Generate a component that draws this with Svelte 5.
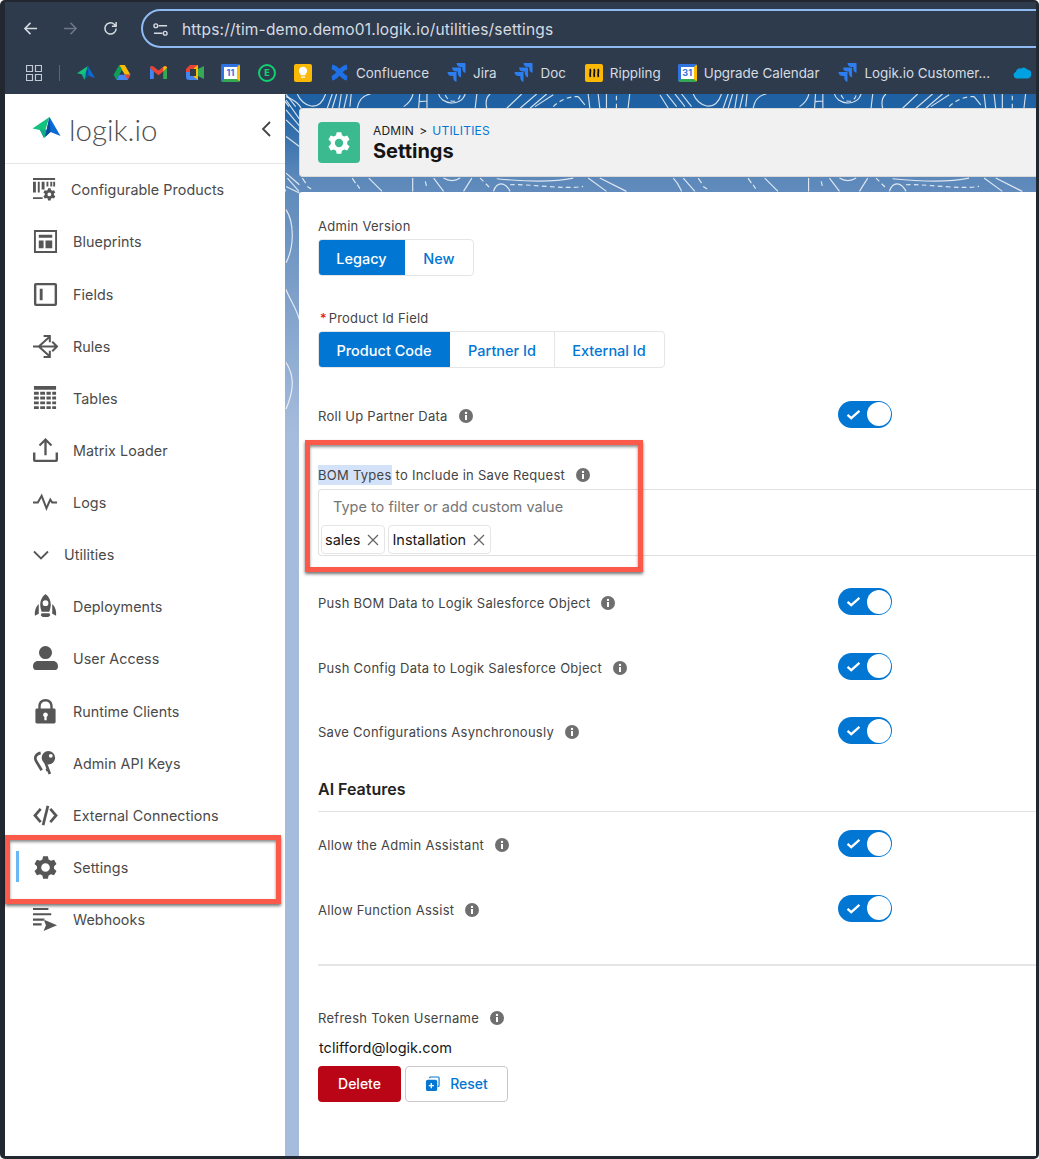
<script>
  // rounded-ish gear, returned as a path with a round hole
  function gear(cx, cy, R, r, hole) {
    let d = '';
    for (let i = 0; i < 6; i++) {
      const a = -90 + i * 60;
      [[r, a - 21], [R, a - 12], [R, a + 12], [r, a + 21]].forEach(([rad, deg], j) => {
        const t = (deg * Math.PI) / 180;
        const x = (cx + rad * Math.cos(t)).toFixed(2);
        const y = (cy + rad * Math.sin(t)).toFixed(2);
        d += (i === 0 && j === 0 ? 'M' : 'L') + x + ' ' + y;
      });
    }
    d += `Z M${cx - hole} ${cy}a${hole} ${hole} 0 1 0 ${hole * 2} 0a${hole} ${hole} 0 1 0 ${-hole * 2} 0Z`;
    return d;
  }

  const nav = [
    {
      name: 'Configurable Products',
      first: true,
      fill:
        'M0 1h23v2H0zM0 5h3v11H0zM5 5h2v11H5zM9 5h3v8H9zM14 5h2v5h-2zM18 5h2v5h-2zM21 5h2v5h-2zM0 21h10v2H0z ' +
        gear(17, 18, 6.5, 4.8, 2)
    },
    {
      name: 'Blueprints',
      fill: 'M1 1h24v24H1zM3 3v20h20V3zM6 6h14v3H6zM6 12h5v8H6zM13 12h7v8h-7z'
    },
    {
      name: 'Fields',
      fill: 'M3 1h20a2 2 0 0 1 2 2v20a2 2 0 0 1-2 2H3a2 2 0 0 1-2-2V3a2 2 0 0 1 2-2zM3.500 3.500v19h19v-19zM7 7h3v12H7z'
    },
    {
      name: 'Rules',
      stroke: 'M0 13h24M20 8l5 5-5 5M6 13L17 3M6 13l11 10M11 2h6.500v6.500M11 24h6.500v-6.500'
    },
    {
      name: 'Tables',
      fill:
        'M1 0h23v4H1zM1 6h5v3H1zM7.500 6h5v3h-5zM14 6h4.500v3H14zM20 6h4v3h-4zM1 11h5v3H1zM7.500 11h5v3h-5zM14 11h4.500v3H14zM20 11h4v3h-4zM1 16h5v3H1zM7.500 16h5v3h-5zM14 16h4.500v3H14zM20 16h4v3h-4zM1 21h5v3H1zM7.500 21h5v3h-5zM14 21h4.500v3H14zM20 21h4v3h-4z'
    },
    {
      name: 'Matrix Loader',
      fill: 'M13 0l7 7-1.500 1.500L14.200 4.300V18h-2.400V4.300L7.500 8.500 6 7zM0 15h2.500v7.500h21V15H26v8a2 2 0 0 1-2 2H2a2 2 0 0 1-2-2z'
    },
    {
      name: 'Logs',
      stroke: 'M0 13h5l4-7 5 13 4-9 2 3h5'
    },
    { name: 'Utilities', group: true },
    {
      name: 'Deployments',
      fill:
        'M13 0c4 3 5.500 7 5.500 11 0 3-1 6-1.500 7.500H9C8.500 17 7.500 14 7.500 11 7.500 7 9 3 13 0zM13 6.500a3 3 0 1 0 0 6 3 3 0 0 0 0-6zM6 10.500v10l-4 2c-.5-4 .5-9 4-12zM20 10.500c3.500 3 4.500 8 4 12l-4-2zM9 20h8l1 2-2 2h-6l-2-2z'
    },
    {
      name: 'User Access',
      fill: 'M13 0a6.800 6.800 0 1 1 0 13.600A6.800 6.800 0 0 1 13 0zM5 15.500h16c3 0 5 2.500 5 5.500 0 2-1 4-3 4H3c-2 0-3-2-3-4 0-3 2-5.500 5-5.500z'
    },
    {
      name: 'Runtime Clients',
      fill:
        'M13 0c4.500 0 7.500 3 7.500 7.500V10H18V7.500C18 4.500 16 2.500 13 2.500S8 4.500 8 7.500V10H5.500V7.500C5.500 3 8.500 0 13 0zM4 10h18a1.500 1.500 0 0 1 1.500 1.500V24a1.500 1.500 0 0 1-1.500 1.500H4A1.500 1.500 0 0 1 2.500 24V11.500A1.500 1.500 0 0 1 4 10zM13 14a2.500 2.500 0 0 0-1.200 4.700V22h2.400v-3.300A2.500 2.500 0 0 0 13 14z'
    },
    {
      name: 'Admin API Keys',
      // big bow with a hole, plus the second key curling round the left
      fill: 'M16 0a7 7 0 1 1 0 14 7 7 0 0 1 0-14zM18.500 3a2 2 0 1 0 0 4 2 2 0 0 0 0-4z',
      stroke: 'M13 12l4.500 12M16 19l-2.500 1M8 2C3 3 1 7 3.500 11L9 20',
      bold: true
    },
    {
      name: 'External Connections',
      stroke: 'M8 6l-6 7 6 7M18 6l6 7-6 7M15.500 3l-5 20',
      bold: true
    },
    {
      name: 'Settings',
      active: true,
      fill: gear(13, 13, 12, 9, 4.500)
    },
    {
      name: 'Webhooks',
      fill: 'M0 1h16v2.200H0zM0 6.500h19v2.200H0zM0 12h12v2.200H0zM0 17h9v2.200H0zM11 13l14 6-14 6 2.500-6z'
    }
  ];

  const groups = [
    [{ label: 'Push BOM Data to Logik Salesforce Object' }, { label: 'Push Config Data to Logik Salesforce Object' }, { label: 'Save Configurations Asynchronously' }],
    [{ label: 'Allow the Admin Assistant' }, { label: 'Allow Function Assist' }]
  ];

  const jira = 'M19 0H9.500c0 2.400 1.900 4.300 4.300 4.300h1.800V6c0 2.400 1.900 4.300 3.400 4.300V.8a.8.8 0 0 0-.8-.8zM14.300 4.700H4.800c0 2.400 1.900 4.300 4.300 4.300h1.800v1.700c0 2.400 1.900 4.300 3.400 4.300V5.500a.8.8 0 0 0-.8-.8zM9.500 9.500H0c0 2.400 1.900 4.300 4.300 4.300h1.800v1.700c0 2.400 1.900 4.300 3.400 4.300v-9.500a.8.8 0 0 0 0-.8z';
</script>

{#snippet info()}
  <svg class="info" viewBox="0 0 14 14" aria-hidden="true">
    <circle cx="7" cy="7" r="7" fill="#6f6f6f" />
    <rect x="6" y="6" width="2" height="5" fill="#fff" />
    <circle cx="7" cy="3.900" r="1.200" fill="#fff" />
  </svg>
{/snippet}

{#snippet toggle()}
  <div class="toggle">
    <svg viewBox="0 0 16 12" aria-hidden="true"><path d="M1.500 6.500l4 3.500 9-8" /></svg>
    <span class="knob"></span>
  </div>
{/snippet}

{#snippet logo(cls)}
  <svg class={cls} viewBox="0 0 28 24" aria-hidden="true">
    <path d="M0 12.500L17 1l-4.500 14z" fill="#12c27e" />
    <path d="M7 13.500l6 0 3 1-4.500 8z" fill="#0fae84" />
    <path d="M17 1l11 19-10-4-5.500 5z" fill="#0b6bd6" />
    <path d="M17 1l1 15-5.500 5z" fill="#0a4c9a" />
  </svg>
{/snippet}

<div class="window">
  <header class="chrome">
    <div class="toolbar">
      <svg class="tool" viewBox="0 0 16 16"><path d="M15 8H2M8 2L2 8l6 6" /></svg>
      <svg class="tool dim" viewBox="0 0 16 16"><path d="M1 8h13M8 2l6 6-6 6" /></svg>
      <svg class="tool" viewBox="0 0 16 16"><path d="M14 8a6 6 0 1 1-2-4.500L14 5.500M14 1v4.500H9.500" /></svg>
      <div class="url">
        <svg class="tune" viewBox="0 0 16 16"><path d="M6 4h9M1 12h9" /><circle cx="3" cy="4" r="2" /><circle cx="13" cy="12" r="2" /></svg>
        <span>https://tim-demo.demo01.logik.io/utilities/settings</span>
      </div>
    </div>
    <div class="bookmarks">
      <svg class="apps" viewBox="0 0 16 16"><path d="M.5.5h6v6h-6zM9.500.5h6v6h-6zM.5 9.500h6v6h-6zM9.500 9.500h6v6h-6z" /></svg>
      <span class="sep"></span>
      {@render logo('bm-logo')}
      <svg class="bm drive" viewBox="0 0 18 16">
        <path d="M6 0h6l6 10.500h-6z" fill="#fbbc04" />
        <path d="M6 0l3 5.200-6 10.500L0 10.500z" fill="#0f9d58" />
        <path d="M3 16l3-5.500h12L15 16z" fill="#4285f4" />
        <path d="M15 16l-3-5.500h6z" fill="#ea4335" />
      </svg>
      <svg class="bm gmail" viewBox="0 0 18 14">
        <path d="M0 2v12h4V6z" fill="#4285f4" />
        <path d="M14 6v8h4V2z" fill="#34a853" />
        <path d="M0 2c0-2 2.500-2.500 4-1l5 4 5-4c1.500-1.500 4-1 4 1l-4 4-5 4-5-4z" fill="#ea4335" />
        <path d="M14 1.200c1.500-1.400 4-1 4 .8L14 6z" fill="#fbbc04" />
      </svg>
      <svg class="bm meet" viewBox="0 0 18 15">
        <path d="M4 0h8v4H4v3H0V4z" fill="#ea4335" />
        <path d="M0 7h4v4h8v4H3a3 3 0 0 1-3-3z" fill="#4285f4" />
        <path d="M12 0v15l-4-3V3z" fill="#fbbc04" />
        <path d="M12 4l6-3v13l-6-3z" fill="#34a853" />
        <rect x="4" y="4" width="6" height="7" fill="#2e3b4d" />
      </svg>
      <div class="cal first-cal"><span>11</span></div>
      <div class="evernote"><span>E</span></div>
      <div class="keep"><svg viewBox="0 0 12 16"><path d="M6 1a5 5 0 0 1 3 9v1.500H3V10A5 5 0 0 1 6 1zM3.500 13h5v1.500h-5z" fill="#fff" /></svg></div>
      <div class="mark conf">
        <svg class="cross" viewBox="0 0 20 20"><path d="M2 16C8 15 11 5 18 4M2 4C9 5 12 15 18 16" /></svg>
        <span>Confluence</span>
      </div>
      <div class="mark jira"><svg viewBox="0 0 19 20"><path d={jira} fill="#2b7df0" /></svg><span>Jira</span></div>
      <div class="mark doc"><svg viewBox="0 0 19 20"><path d={jira} fill="#2b7df0" /></svg><span>Doc</span></div>
      <div class="mark rip">
        <svg class="ripple" viewBox="0 0 18 18"><path d="M5 5c1.500 2.500-1 5 .5 8M9 5c1.500 2.500-1 5 .5 8M13 5c1.500 2.500-1 5 .5 8" /></svg>
        <span>Rippling</span>
      </div>
      <div class="mark upg"><div class="cal"><span>31</span></div><span>Upgrade Calendar</span></div>
      <div class="mark cust"><svg viewBox="0 0 19 20"><path d={jira} fill="#2b7df0" /></svg><span>Logik.io Customer...</span></div>
      <svg class="cloud" viewBox="0 0 18 12"><path d="M4 12a3.500 3.500 0 0 1-1-6.800A4 4 0 0 1 8.500 2 3.500 3.500 0 0 1 14 3a4.500 4.500 0 0 1 0 9z" fill="#00a1e0" /></svg>
    </div>
  </header>

  <div class="main">
    <aside class="sidebar">
      <div class="brand">
        {@render logo('brand-logo')}
        <span class="word">logik.io</span>
        <svg class="collapse" viewBox="0 0 10 16"><path d="M9 1L2 8l7 7" /></svg>
      </div>
      <nav>
        {#each nav as item}
          {#if item.group}
            <div class="item group">
              <svg class="caret" viewBox="0 0 16 10"><path d="M1 1.500l7 7 7-7" /></svg>
              <span>{item.name}</span>
            </div>
          {:else}
            <div class="item" class:first={item.first} class:active={item.active}>
              <svg class="icon" viewBox="0 0 26 26" aria-hidden="true">
                {#if item.fill}<path d={item.fill} fill-rule="evenodd" />{/if}
                {#if item.stroke}<path class="line" class:bold={item.bold} d={item.stroke} />{/if}
              </svg>
              <span>{item.name}</span>
            </div>
          {/if}
        {/each}
      </nav>
    </aside>

    <section class="content">
      <svg class="contours" viewBox="285 94 751 1065" aria-hidden="true">
        <defs>
          <g id="tile" transform="translate(660 90) scale(.3333)">
            <path d="M0 15L25 55M20 12L50 50M45 12L75 50M65 12L95 50M100 12C115 50 165 70 185 12M190 55L205 12M205 55L218 12M225 55L232 12M240 55L250 12M258 50L262 12M280 55C285 30 300 15 320 12M420 50C435 40 445 25 448 12M465 55L468 12M490 55V12M467 35L490 33M525 12C530 40 590 55 605 12M635 55L640 12M670 55C665 35 670 20 680 12M730 55L775 12M770 55L820 12M800 55L850 12M815 50L870 14M945 20L965 45M980 55L975 12M1010 55L1005 12M1030 55V12M1095 55L1100 12" />
            <path class="dash" d="M545 15C555 40 585 40 590 15M870 50C890 30 920 18 945 20M1060 55V12" />
            <path d="M40 265C55 280 60 295 65 305M70 265L105 305M115 265L125 280M265 265L275 280M315 265L355 305M447 265V305M510 265L540 305M540 265C555 275 575 275 590 265M625 265L600 305M690 305C700 275 725 275 740 305M700 267C780 275 860 280 930 265M975 265L1030 305M1010 265L1090 305" />
            <path class="dash" d="M130 290L145 300M280 285L290 300M485 275L490 295M650 265L680 295M740 285C800 282 900 300 960 290" />
          </g>
        </defs>
        <use href="#tile" />
        <use href="#tile" x="-397" />
        <g transform="translate(280 90) scale(.3333)">
          <path d="M15 30L57 90M15 60L57 110M15 90L57 130M15 140L55 170M15 250L55 285M15 290L55 310" />
          <path d="M15 20C30 25 55 40 60 55M15 360C40 400 40 470 15 520M15 600C30 640 50 660 57 700M15 820C40 860 40 900 15 960" />
        </g>
      </svg>

      <div class="page-head">
        <div class="head-icon">
          <svg viewBox="0 0 26 26" aria-hidden="true"><path d={gear(13, 13, 12, 9, 4.500)} fill="#fff" fill-rule="evenodd" /></svg>
        </div>
        <div>
          <div class="crumbs">ADMIN <span class="gt">&gt;</span> <span class="link">UTILITIES</span></div>
          <h1>Settings</h1>
        </div>
      </div>

      <div class="panel">
        <div class="label version">Admin Version</div>
        <div class="segments">
          <span class="seg on legacy">Legacy</span>
          <span class="seg new">New</span>
        </div>

        <div class="label product"><b>*</b> Product Id Field</div>
        <div class="segments">
          <span class="seg on code">Product Code</span>
          <span class="seg partner">Partner Id</span>
          <span class="seg external">External Id</span>
        </div>

        <div class="row rollup">
          <div class="label">Roll Up Partner Data {@render info()}</div>
          {@render toggle()}
        </div>

        <div class="label bom"><mark>BOM Types</mark> to Include in Save Request {@render info()}</div>
        <div class="combo">
          <div class="placeholder">Type to filter or add custom value</div>
          <div class="pills">
            <span class="pill">sales <svg viewBox="0 0 12 12"><path d="M1 1l10 10M11 1L1 11" /></svg></span>
            <span class="pill">Installation <svg viewBox="0 0 12 12"><path d="M1 1l10 10M11 1L1 11" /></svg></span>
          </div>
        </div>

        <div class="after-combo">
          {#each groups[0] as row}
            <div class="row">
              <div class="label">{row.label} {@render info()}</div>
              {@render toggle()}
            </div>
          {/each}
        </div>

        <h2>AI Features</h2>
        <hr class="thin" />

        <div class="ai">
          {#each groups[1] as row}
            <div class="row">
              <div class="label">{row.label} {@render info()}</div>
              {@render toggle()}
            </div>
          {/each}
        </div>

        <hr class="thick" />

        <div class="label token">Refresh Token Username {@render info()}</div>
        <div class="email">tclifford@logik.com</div>
        <div class="actions">
          <button class="delete">Delete</button>
          <button class="reset">
            <svg viewBox="0 0 16 16" aria-hidden="true">
              <path d="M5 2.500V2a1 1 0 0 1 1-1h8a1 1 0 0 1 1 1v8a1 1 0 0 1-1 1h-.5" class="copy" />
              <path d="M3 4h8a2 2 0 0 1 2 2v8a2 2 0 0 1-2 2H3a2 2 0 0 1-2-2V6a2 2 0 0 1 2-2zM6 7.500V9.500H4v1.500h2v2h1.500v-2h2V9.500h-2v-2z" fill="#0176d3" fill-rule="evenodd" />
            </svg>
            Reset
          </button>
        </div>
      </div>
    </section>
  </div>

  <!-- annotations drawn on top of the screenshot -->
  <div class="callout settings-box"></div>
  <div class="callout bom-box"></div>
</div>

<style>
  :global(body) {
    margin: 0;
    background: #fff;
    overflow: hidden;
  }

  .window {
    position: relative;
    width: 1039px;
    height: 1159px;
    box-sizing: border-box;
    padding: 2px 3px 3px 5px;
    background: #23272f;
    border-radius: 5px;
    display: flex;
    flex-direction: column;
    overflow: hidden;
    font-family: Inter, "Liberation Sans", sans-serif;
    color: #444;
  }

  /* browser chrome */
  .chrome {
    height: 92px;
    background: #2e3b4d;
    color: #d6dbe2;
    overflow: hidden;
    flex: none;
  }
  .toolbar {
    height: 46px;
    padding-top: 7px;
    box-sizing: border-box;
    display: flex;
    align-items: flex-start;
  }
  .tool {
    width: 15px;
    height: 15px;
    margin: 12px 25px 0 18px;
    fill: none;
    stroke: #d6dbe2;
    stroke-width: 1.600;
    flex: none;
  }
  .tool + .tool { margin-left: 0; }
  .tool.dim { stroke: #6c7684; }
  .url {
    flex: none;
    width: 960px;
    margin-left: -2px;
    height: 39px;
    box-sizing: border-box;
    border: 2px solid #8dbbf2;
    border-radius: 20px 0 0 20px;
    display: flex;
    align-items: center;
    padding: 1px 0 0 10px;
    font-size: 15.500px;
    letter-spacing: 0.18px;
  }
  .tune {
    width: 15px;
    height: 15px;
    margin-right: 14px;
    fill: none;
    stroke: #d6dbe2;
    stroke-width: 1.500;
  }
  .bookmarks {
    height: 46px;
    position: relative;
    display: flex;
    align-items: center;
    font-size: 13.400px;
    padding-left: 21px;
    padding-top: 3px;
    box-sizing: border-box;
  }
  .apps {
    width: 16px;
    height: 16px;
    fill: none;
    stroke: #c3c9d2;
    stroke-width: 1.200;
    flex: none;
  }
  .sep {
    width: 1px;
    height: 16px;
    margin: 0 17px;
    background: #5b6573;
    flex: none;
  }
  .bm-logo { width: 18px; height: 16px; flex: none; }
  .bm { height: 15px; flex: none; }
  .drive { width: 18px; margin-left: 18px; }
  .gmail { width: 17px; margin-left: 19px; }
  .meet { width: 18px; margin-left: 19px; }
  .cal {
    width: 19px;
    height: 18px;
    box-sizing: border-box;
    border: 3px solid #2f73e0;
    border-bottom-color: #34a853;
    border-right-color: #fbbc04;
    border-radius: 2px;
    background: #fff;
    display: flex;
    align-items: center;
    justify-content: center;
    flex: none;
    font-size: 9px;
    font-weight: 700;
    color: #2f73e0;
  }
  .first-cal { margin-left: 17px; }
  .evernote {
    width: 18px;
    height: 18px;
    box-sizing: border-box;
    margin-left: 18px;
    border: 2.500px solid #0ed16f;
    border-radius: 50%;
    display: flex;
    align-items: center;
    justify-content: center;
    font-size: 9px;
    font-weight: 800;
    color: #0ed16f;
    flex: none;
  }
  .keep {
    width: 18px;
    height: 18px;
    margin-left: 18px;
    background: #fbb905;
    border-radius: 2px;
    display: flex;
    align-items: center;
    justify-content: center;
    flex: none;
  }
  .keep svg { width: 10px; height: 13px; }
  .mark {
    display: flex;
    align-items: center;
    gap: 7px;
    flex: none;
  }
  .mark svg { width: 19px; height: 19px; flex: none; }
  .mark .cross {
    fill: none;
    stroke: #1f6fe5;
    stroke-width: 5;
  }
  .conf { margin-left: 18px; }
  .jira { margin-left: 18px; }
  .doc { margin-left: 18px; }
  .rip { margin-left: 19px; }
  .upg { margin-left: 17px; }
  .cust { margin-left: 19px; }
  .mark .ripple {
    width: 18px;
    height: 18px;
    background: #fbb905;
    border-radius: 2px;
    fill: none;
    stroke: #111;
    stroke-width: 1.800;
  }
  .cloud {
    width: 18px;
    height: 13px;
    margin-left: 23px;
    flex: none;
  }

  .main {
    flex: 1;
    display: flex;
    min-height: 0;
  }

  /* sidebar */
  .sidebar {
    width: 280px;
    flex: none;
    background: #fff;
  }
  .brand {
    height: 69.700px;
    box-sizing: border-box;
    border-bottom: 1px solid #e6e6e6;
    display: flex;
    align-items: center;
    padding: 0 14px 0 27px;
  }
  .brand-logo { width: 29px; height: 24px; }
  .word {
    margin-left: 8px;
    font-family: Lato, "Open Sans", sans-serif;
    font-weight: 300;
    font-size: 29.500px;
    color: #4e4e4e;
    flex: 1;
    margin-top: 2px;
  }
  .collapse {
    width: 10px;
    height: 16px;
    margin-top: 1px;
    fill: none;
    stroke: #444;
    stroke-width: 1.800;
  }
  .item {
    height: 52.140px;
    display: flex;
    align-items: center;
    padding-left: 28px;
    font-size: 14.300px;
    letter-spacing: 0.07px;
    color: #4a4a4a;
    box-sizing: border-box;
    position: relative;
  }
  .item.first .icon { margin-right: 13px; }
  .icon {
    width: 25px;
    height: 25px;
    margin-right: 15px;
    fill: #565656;
    flex: none;
  }
  .line {
    fill: none;
    stroke: #565656;
    stroke-width: 2.100;
  }
  .line.bold { stroke-width: 2.800; }
  .caret {
    width: 16px;
    height: 10px;
    margin-right: 15px;
    fill: none;
    stroke: #565656;
    stroke-width: 1.800;
  }
  .item.active::before {
    content: "";
    position: absolute;
    left: 11px;
    top: 10px;
    bottom: 11px;
    width: 3px;
    background: #6ab7f5;
  }

  /* content */
  .content {
    position: relative;
    flex: 1;
    min-width: 0;
    padding: 14px 0 0 14px;
    display: flex;
    flex-direction: column;
    gap: 15px;
    background: linear-gradient(#1e60a2 0, #1f62a3 14px, #5c88ba 83px, #a6bcdc 340px);
    overflow: hidden;
  }
  .contours {
    position: absolute;
    inset: 0;
    width: 100%;
    height: 100%;
    fill: none;
    stroke: rgba(255, 255, 255, 0.8);
    stroke-width: 3.500;
  }
  .dash { stroke-dasharray: 14 10; }
  .page-head {
    position: relative;
    height: 69px;
    box-sizing: border-box;
    background: #f1f1f1;
    border: 1px solid #d9d9d9;
    border-right: 0;
    border-radius: 4px 0 0 4px;
    display: flex;
    align-items: center;
    padding-left: 18px;
    gap: 13px;
    flex: none;
  }
  .head-icon {
    width: 42px;
    height: 41px;
    background: #3bba90;
    border-radius: 4px;
    display: flex;
    align-items: center;
    justify-content: center;
  }
  .head-icon svg { width: 24px; height: 24px; }
  .crumbs {
    font-size: 12px;
    line-height: 16px;
    letter-spacing: 0.2px;
    color: #222;
  }
  .gt { margin: 0 1.500px; }
  .link { color: #0176d3; }
  h1 {
    margin: 0;
    font-size: 20px;
    line-height: 24px;
    font-weight: 700;
    color: #141414;
  }

  .panel {
    position: relative;
    flex: 1;
    background: #fff;
    padding: 24px 0 0 19px;
    border-radius: 3px 0 0 0;
  }
  .label {
    font-size: 13px;
    line-height: 20px;
    letter-spacing: 0.27px;
    color: #444;
    display: flex;
    align-items: center;
    white-space: pre-wrap;
  }
  .product { margin-top: 32px; padding-left: 2px; letter-spacing: 0.22px; }
  .product b { color: #ea001e; font-weight: 400; margin-right: -2px; }
  .info {
    width: 14px;
    height: 14px;
    margin-left: 7px;
    flex: none;
  }
  .segments {
    margin-top: 3px;
    display: flex;
    height: 37px;
    box-sizing: border-box;
    border: 1px solid #e5e5e5;
    border-radius: 4px;
    overflow: hidden;
    width: 347px;
  }
  .version + .segments { width: 156px; }
  .seg {
    display: flex;
    align-items: center;
    justify-content: center;
    padding-top: 1px;
    box-sizing: border-box;
    font-size: 14.500px;
    font-weight: 500;
    color: #0176d3;
  }
  .seg.on { background: #0176d3; color: #fff; margin: -1px 0 -1px -1px; }
  .legacy { width: 87px; }
  .new { width: 68px; }
  .code { width: 132px; }
  .partner { width: 105px; border-right: 1px solid #e5e5e5; }
  .external { width: 108px; }
  .row {
    margin-top: 37.500px;
    height: 27px;
    display: grid;
    grid-template-columns: 520px auto;
    align-items: center;
  }
  .row .label { margin-top: 3px; }
  .rollup { margin-top: 32.500px; }
  .after-combo .row:first-child { margin-top: 32px; }
  .toggle {
    width: 54px;
    height: 27px;
    border-radius: 14px;
    background: #0176d3;
    display: flex;
    align-items: center;
  }
  .toggle svg {
    width: 15px;
    height: 11px;
    margin-left: 8px;
    fill: none;
    stroke: #fff;
    stroke-width: 2.500;
  }
  .knob {
    width: 24px;
    height: 24px;
    margin: 0 1.500px 0 auto;
    border-radius: 50%;
    background: #fff;
  }
  .bom { margin-top: 37.500px; }
  mark {
    background: #d3e2f8;
    color: inherit;
  }
  .combo {
    margin-top: 4px;
    height: 67px;
    box-sizing: border-box;
    border: 1px solid #e0e0e0;
    border-right: 0;
    border-radius: 4px 0 0 4px;
    padding: 7px 0 0 2px;
  }
  .placeholder {
    padding-left: 12px;
    font-size: 14.500px;
    line-height: 20px;
    color: #757575;
  }
  .pills {
    margin-top: 8px;
    display: flex;
    gap: 3px;
  }
  .pill {
    height: 29px;
    box-sizing: border-box;
    border: 1px solid #e5e5e5;
    border-radius: 4px;
    display: flex;
    align-items: center;
    gap: 7px;
    padding: 0 5px 0 3px;
    font-size: 14.500px;
    color: #181818;
  }
  .pill svg {
    width: 12px;
    height: 12px;
    fill: none;
    stroke: #666;
    stroke-width: 1.300;
  }
  h2 {
    margin: 34px 0 0;
    font-size: 16px;
    line-height: 22px;
    font-weight: 600;
    color: #222;
  }
  hr {
    border: 0;
    margin: 0;
  }
  .thin {
    margin-top: 11px;
    height: 1px;
    background: #e2e2e2;
  }
  .ai .row:first-child { margin-top: 18px; }
  .thick {
    margin-top: 42px;
    height: 2px;
    background: #e5e5e5;
  }
  .token { margin-top: 42px; }
  .email {
    margin-top: 10px;
    padding-left: 1px;
    font-size: 14.500px;
    line-height: 20px;
    color: #181818;
  }
  .actions {
    margin-top: 8px;
    display: flex;
    gap: 4px;
  }
  button {
    height: 36px;
    border-radius: 4px;
    font: 500 14px Inter, "Liberation Sans", sans-serif;
    box-sizing: border-box;
    display: flex;
    align-items: center;
    justify-content: center;
  }
  .delete {
    width: 83px;
    border: 0;
    background: #ba0517;
    color: #fff;
  }
  .reset {
    width: 103px;
    border: 1px solid #c9c9c9;
    background: #fff;
    color: #0176d3;
    gap: 10px;
  }
  .reset svg { width: 15px; height: 15px; }
  .copy {
    fill: none;
    stroke: #0176d3;
    stroke-width: 1.200;
  }

  /* red annotation boxes */
  .callout {
    position: absolute;
    box-sizing: border-box;
    border: 5px solid #fb5a4b;
    box-shadow: 0 2px 3px rgba(0, 0, 0, 0.55), inset 0 2px 3px rgba(0, 0, 0, 0.45);
    pointer-events: none;
  }
  .settings-box {
    left: 5px;
    top: 835px;
    width: 276px;
    height: 69px;
  }
  .bom-box {
    left: 305px;
    top: 440px;
    width: 338px;
    height: 132px;
  }
</style>
